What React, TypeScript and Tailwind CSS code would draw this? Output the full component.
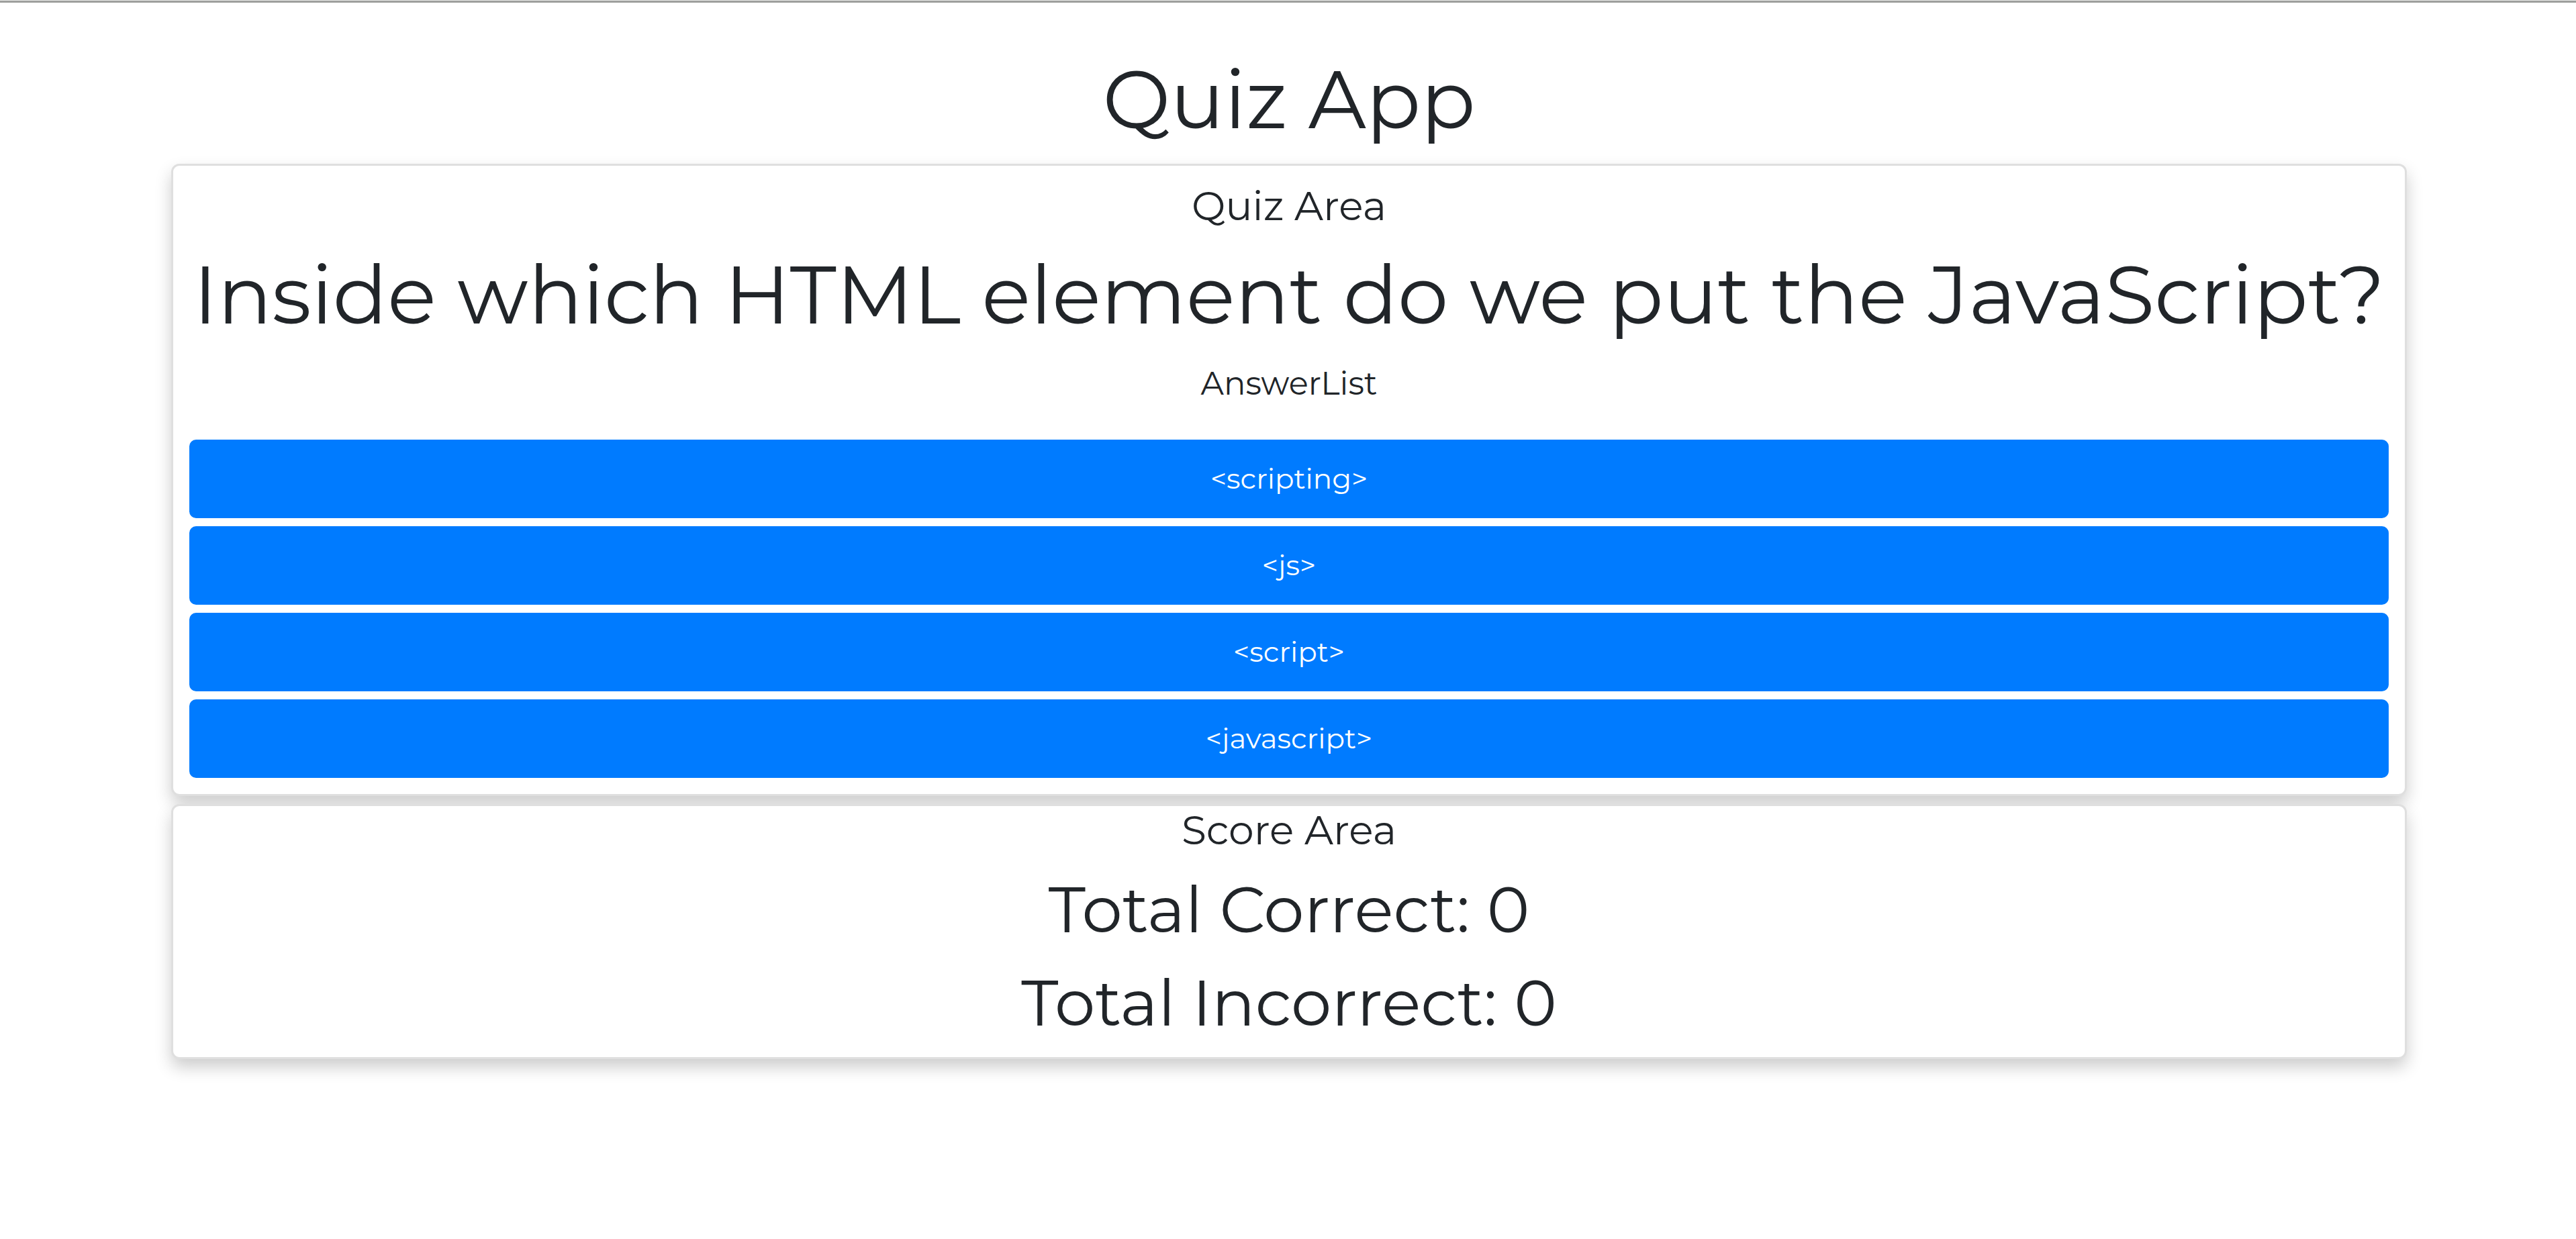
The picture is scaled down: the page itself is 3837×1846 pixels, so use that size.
import { useState } from 'react';
import type { ReactNode } from 'react';

const question = {
  text: 'Inside which HTML element do we put the JavaScript?',
  answers: ['<scripting>', '<js>', '<script>', '<javascript>'],
  correct: 2,
};

function Card({ label, className, children }: { label: string; className: string; children: ReactNode }) {
  return (
    <section
      aria-label={label}
      className={`flex flex-col gap-6 rounded-xl border-[3px] border-[#dfdfdf] bg-white text-center shadow-[0_12px_24px_0_rgba(0,0,0,0.2)] ${className}`}
    >
      {children}
    </section>
  );
}

function AnswerList({ answers, onAnswer }: { answers: string[]; onAnswer: (index: number) => void }) {
  return (
    <div className="flex flex-col gap-12">
      <p className="text-5xl leading-[72px]">AnswerList</p>
      <ul className="flex flex-col gap-3">
        {answers.map((answer, index) => (
          <li key={answer}>
            <button
              type="button"
              onClick={() => onAnswer(index)}
              className="block w-full rounded-[10px] border-[3px] border-[#007bff] bg-[#007bff] px-9 py-6 text-[42px] leading-[63px] text-white"
            >
              {answer}
            </button>
          </li>
        ))}
      </ul>
    </div>
  );
}

export default function App() {
  const [correct, setCorrect] = useState(0);
  const [incorrect, setIncorrect] = useState(0);

  const handleAnswer = (index: number) => {
    if (index === question.correct) setCorrect(correct + 1);
    else setIncorrect(incorrect + 1);
  };

  return (
    <div className="min-h-screen border-t border-[#e9eae9] bg-white font-[Montserrat,Inter,sans-serif] text-[#212529]">
      <div className="h-[3px] bg-[#9e9f9d]" />
      <main className="pt-[72px] pl-[3px]">
        <div className="mx-auto flex max-w-[3330px] flex-col">
          <h1 className="mb-6 text-center text-[120px] leading-[144px]">Quiz App</h1>
          <div className="flex flex-col gap-3">
            <Card label="Quiz" className="p-6">
              <h2 className="text-6xl leading-[72px]">Quiz Area</h2>
              <h3 className="text-[120px] leading-[144px]">{question.text}</h3>
              <AnswerList answers={question.answers} onAnswer={handleAnswer} />
            </Card>
            <Card label="Score" className="pb-6">
              <h2 className="text-6xl leading-[72px]">Score Area</h2>
              <h3 className="text-8xl leading-[115px]">Total Correct: {correct}</h3>
              <h3 className="text-8xl leading-[115px]">Total Incorrect: {incorrect}</h3>
            </Card>
          </div>
        </div>
      </main>
    </div>
  );
}
